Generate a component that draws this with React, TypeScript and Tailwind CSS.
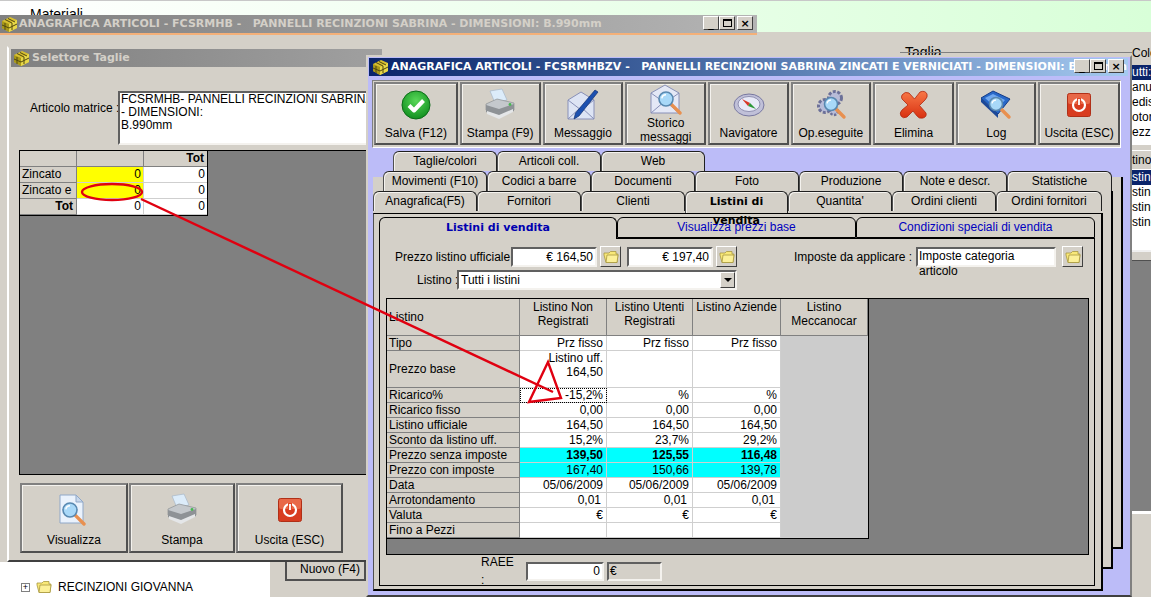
import React from "react";

const raised = "border border-t-white border-l-white border-b-[#404040] border-r-[#404040]";
const btnFrame = "border-2 border-t-[#808080] border-l-[#808080] border-b-[#505050] border-r-[#505050] shadow-[inset_1px_1px_0_#f4f2ee]";
const sunken = "border-2 border-t-[#606060] border-l-[#606060] border-b-[#f4f2ee] border-r-[#f4f2ee]";

const Cube = () => (
	<svg width="17" height="17" viewBox="0 0 17 17" className="shrink-0">
		<polygon points="1,5 9,1 16,4 16,12 8,16 1,12" fill="#d8c030" />
		<polygon points="1,5 8,8 8,16 1,12" fill="#a89818" />
		<polygon points="8,8 16,4 16,12 8,16" fill="#e8d848" />
		<path d="M4 3.5 L11 7 M7 2.5 L14 6 M4 7 V14 M11 7 V14 M1 9 L8 12 M8 12 L16 8" stroke="#504810" strokeWidth="1" fill="none" />
	</svg>
);

const Magnifier = ({ x, y, r = 7 }: { x: number; y: number; r?: number }) => (
	<g>
		<line x1={x + r * 0.7} y1={y + r * 0.7} x2={x + r * 2} y2={y + r * 2} stroke="#e89050" strokeWidth="3.4" strokeLinecap="round" />
		<circle cx={x} cy={y} r={r} fill="#a8d8f8" stroke="#5888b0" strokeWidth="1.6" />
		<path d={`M${x - r * 0.6} ${y - r * 0.1} A${r * 0.6} ${r * 0.6} 0 0 1 ${x} ${y - r * 0.6}`} stroke="#fff" strokeWidth="1.4" fill="none" />
	</g>
);

const Check = () => (
	<svg width="30" height="30" viewBox="0 0 30 30">
		<defs>
			<radialGradient id="chk" cx="50%" cy="35%" r="70%">
				<stop offset="0" stopColor="#58d858" />
				<stop offset="1" stopColor="#0c8a1c" />
			</radialGradient>
		</defs>
		<circle cx="15" cy="15" r="14" fill="url(#chk)" stroke="#0c6c18" />
		<path d="M8 15.5 L13 20.5 L22.5 10.5" stroke="#fff" strokeWidth="4" fill="none" strokeLinejoin="round" />
	</svg>
);

const Printer = () => (
	<svg width="34" height="34" viewBox="0 0 34 34">
		<polygon points="7,3 19,1 24,12 12,15" fill="#dcecfa" stroke="#a8b8c8" strokeWidth="0.7" />
		<polygon points="3,16 14,11 31,15 31,22 16,27 3,22" fill="#c4c8cc" stroke="#8c9094" strokeWidth="0.7" />
		<polygon points="3,17 16,21 31,16 31,23 16,30 3,24" fill="#8e9296" />
		<polygon points="4,23 16,27 30,21 30,24 16,31 4,26" fill="#e4e6e8" />
		<circle cx="27" cy="16.5" r="1.4" fill="#48b850" />
	</svg>
);

const PencilEnvelope = () => (
	<svg width="32" height="34" viewBox="0 0 32 34">
		<polygon points="1,12 14,4 27,12 27,31 1,31" fill="#dde4f4" stroke="#8890b8" />
		<path d="M1 31 L14 19 L27 31 M1 12 L14 22 L27 12" stroke="#8890b8" fill="none" />
		<path d="M28 2 L31 4 L12 28 L7 31 L8.5 25 Z" fill="#1c50b0" stroke="#123070" strokeWidth="0.7" />
	</svg>
);

const SearchEnvelope = () => (
	<svg width="32" height="32" viewBox="0 0 32 32">
		<polygon points="1,9 15,1 29,9 29,29 1,29" fill="#e4e8f6" stroke="#8890b8" />
		<path d="M1 29 L15 17 L29 29 M1 9 L15 19 L29 9" stroke="#8890b8" fill="none" />
		<Magnifier x={16} y={15} r={7} />
	</svg>
);

const Compass = () => (
	<svg width="32" height="26" viewBox="0 0 32 26">
		<ellipse cx="16" cy="13" rx="15" ry="11" fill="#c0c0d8" stroke="#7878a0" />
		<ellipse cx="16" cy="12" rx="11" ry="7.5" fill="#e8eaf8" stroke="#9090b0" />
		<polygon points="9,7 17,11 15,14" fill="#d83828" />
		<polygon points="23,17 17,11 15,14" fill="#2c9838" />
	</svg>
);

const Gears = () => (
	<svg width="32" height="32" viewBox="0 0 32 32">
		<circle cx="20" cy="9" r="6.5" fill="#b8bcd8" stroke="#6c7098" strokeWidth="3" strokeDasharray="3 1.6" />
		<circle cx="10" cy="17" r="6.5" fill="#b8bcd8" stroke="#6c7098" strokeWidth="3" strokeDasharray="3 1.6" />
		<circle cx="19" cy="22" r="4" fill="#b8bcd8" stroke="#6c7098" strokeWidth="2.4" strokeDasharray="2.4 1.4" />
		<Magnifier x={16} y={15} r={6.5} />
	</svg>
);

const RedX = () => (
	<svg width="30" height="30" viewBox="0 0 30 30">
		<defs>
			<linearGradient id="rx" x1="0" y1="0" x2="0" y2="1">
				<stop offset="0" stopColor="#f87848" />
				<stop offset="1" stopColor="#d83010" />
			</linearGradient>
		</defs>
		<path d="M3 5 Q6 1 10 3 L15.5 9 L21 2 Q26 0 28 4 Q29 7 26 10 L20.5 15.5 L27 23 Q28 27 24 28 Q20 29 18 26 L14 21 L8 27 Q4 29 2 26 Q0 23 3 20 L9 15 L3 9 Q2 7 3 5 Z" fill="url(#rx)" stroke="#b02810" strokeWidth="0.8" />
	</svg>
);

const Book = () => (
	<svg width="32" height="30" viewBox="0 0 32 30">
		<polygon points="1,8 13,1 30,9 18,24" fill="#2868c8" stroke="#143c88" />
		<polygon points="1,8 18,24 18,28 1,12" fill="#1c4898" />
		<polygon points="5,8 13,4 25,10 17,19" fill="#70a8f0" />
		<Magnifier x={16} y={14} r={6.5} />
	</svg>
);

const Power = () => (
	<svg width="24" height="24" viewBox="0 0 24 24">
		<rect x="0.5" y="0.5" width="23" height="23" rx="2" fill="#d83c20" stroke="#b03018" />
		<rect x="1" y="1" width="22" height="10" rx="2" fill="#e86848" />
		<circle cx="12" cy="12" r="6" fill="none" stroke="#fff" strokeWidth="2.2" />
		<line x1="12" y1="5" x2="12" y2="12" stroke="#e04828" strokeWidth="4" />
		<line x1="12" y1="6" x2="12" y2="12" stroke="#fff" strokeWidth="1.8" />
	</svg>
);

const DocSearch = () => (
	<svg width="30" height="32" viewBox="0 0 30 32">
		<polygon points="1,1 17,1 24,8 24,29 1,29" fill="#eaf2fc" stroke="#90a8c8" />
		<polygon points="17,1 17,8 24,8" fill="#c8d8ec" stroke="#90a8c8" />
		<Magnifier x={11} y={16} r={7} />
	</svg>
);

const Folder = () => (
	<svg width="16" height="14" viewBox="0 0 16 14">
		<path d="M1 3 H6 L7.5 1.5 H13 V4 H15 L14 12.5 H3 L1 5 Z" fill="#f8e878" stroke="#a89840" strokeWidth="0.8" />
		<path d="M4 5 H15 L14 12.5 H3 Z" fill="#fcf098" stroke="#a89840" strokeWidth="0.8" />
	</svg>
);

const FolderBtn = () => (
	<div className={`w-[21px] h-[21px] bg-[#d4d0c8] flex items-center justify-center ${raised}`}>
		<Folder />
	</div>
);

const ToolBtn = ({ icon, label, w }: { icon: React.ReactNode; label: string; w: string }) => (
	<div className={`${w} h-[63px] bg-[#d4d0c8] flex flex-col items-center pb-[3px] ${btnFrame}`}>
		<div className="flex-1 flex items-center justify-center">{icon}</div>
		<span className="text-center leading-[14px]">{label}</span>
	</div>
);

const Tab = ({ label, w = "w-[104px]" }: { label: string; w?: string }) => (
	<div className={`${w} h-[20px] bg-[#d4d0c8] text-center leading-[19px] rounded-t-[6px] border border-b-0 border-t-[#202020] border-l-[#505050] border-r-[#202020] shadow-[inset_1px_1px_0_#f4f2ee]`}>
		{label}
	</div>
);

const rows: { label: string; vals: string[]; h?: string; cls?: string }[] = [
	{ label: "Tipo", vals: ["Prz fisso", "Prz fisso", "Prz fisso"] },
	{ label: "Prezzo base", vals: ["Listino uff.\n164,50", "", ""], h: "h-[37px]" },
	{ label: "Ricarico%", vals: ["-15,2%", "%", "%"] },
	{ label: "Ricarico fisso", vals: ["0,00", "0,00", "0,00"] },
	{ label: "Listino ufficiale", vals: ["164,50", "164,50", "164,50"] },
	{ label: "Sconto da listino uff.", vals: ["15,2%", "23,7%", "29,2%"] },
	{ label: "Prezzo senza imposte", vals: ["139,50", "125,55", "116,48"], cls: "bg-[#00ffff] font-bold" },
	{ label: "Prezzo con imposte 20%", vals: ["167,40", "150,66", "139,78"], cls: "bg-[#00ffff]" },
	{ label: "Data", vals: ["05/06/2009", "05/06/2009", "05/06/2009"] },
	{ label: "Arrotondamento", vals: ["0,01", "0,01", "0,01"] },
	{ label: "Valuta", vals: ["€", "€", "€"] },
	{ label: "Fino a Pezzi", vals: ["", "", ""] },
];

const colW = ["w-[87px]", "w-[86px]", "w-[88px]"];

const PriceGrid = () => (
	<div className="ml-[6px] mt-[8px] w-[703px] h-[257px] bg-[#808080] border border-black">
		<div className="w-[482px] border-r border-b border-black bg-[#cccccc]">
			<div className="flex h-[37px]">
				<div className="w-[133px] bg-[#d4d0c8] border-r border-b border-[#808080] flex items-center pl-[2px]">Listino</div>
				{["Listino Non\nRegistrati", "Listino Utenti\nRegistrati", "Listino Aziende", "Listino\nMeccanocar"].map((h, i) => (
					<div key={i} className={`${i === 3 ? "w-[87px]" : colW[i]} bg-[#d4d0c8] border-r border-b border-[#808080] text-center whitespace-pre-line pt-[1px] leading-[14px]`}>
						{h}
					</div>
				))}
			</div>
			{rows.map((r, i) => (
				<div key={i} className={`flex ${r.h ?? "h-[15px]"}`}>
					<div className={`w-[133px] bg-[#d4d0c8] border-r border-b border-[#808080] pl-[2px] leading-[14px] ${r.h ? "flex items-center" : ""}`}>
						{r.label}
					</div>
					{r.vals.map((v, j) => (
						<div key={j} className={`${colW[j]} border-r border-b border-[#cfcfcf] text-right pr-[3px] leading-[14px] whitespace-pre-line ${r.cls ?? "bg-white"} ${r.label === "Ricarico%" && j === 0 ? "outline-1 outline-dotted outline-black -outline-offset-1" : ""} ${r.label === "Arrotondamento" ? "pr-[5px]" : ""}`}>
							{v}
						</div>
					))}
				</div>
			))}
		</div>
	</div>
);

const FrontWindow = () => (
	<div className="absolute left-[366px] top-[55px] w-[766px] h-[542px] bg-[#bcbcf8] border-2 border-[#d4d0c8] border-b-[#404040] border-r-[#808080] pl-[1px] pr-[2px]">
		{/* title */}
		<div className="h-[18px] mt-[1px] bg-gradient-to-r from-[#0a246a] to-[#a6caf0] flex items-center pl-[3px] gap-[2px] text-white font-bold text-[11px] [font-family:'DejaVu_Sans',Verdana,sans-serif] whitespace-pre relative">
			<Cube />
			<span>ANAGRAFICA ARTICOLI - FCSRMHBZV -   PANNELLI RECINZIONI SABRINA ZINCATI E VERNICIATI - DIMENSIONI: B.990mm</span>
			<WinButtons />
		</div>
		{/* toolbar */}
		<div className="mt-[4px] ml-[3px] w-[749px] h-[68px] bg-[#d4d0c8] border border-t-[#808080] border-l-[#808080] border-b-white border-r-white flex gap-[2px] pl-[1px] pt-[1px]">
			<ToolBtn w="w-[84px]" icon={<Check />} label="Salva (F12)" />
			<ToolBtn w="w-[81px]" icon={<Printer />} label="Stampa (F9)" />
			<ToolBtn w="w-[81px]" icon={<PencilEnvelope />} label="Messaggio" />
			<ToolBtn w="w-[81px]" icon={<SearchEnvelope />} label={"Storico messaggi"} />
			<ToolBtn w="w-[81px]" icon={<Compass />} label="Navigatore" />
			<ToolBtn w="w-[80px]" icon={<Gears />} label="Op.eseguite" />
			<ToolBtn w="w-[82px]" icon={<RedX />} label="Elimina" />
			<ToolBtn w="w-[80px]" icon={<Book />} label="Log" />
			<ToolBtn w="w-[82px]" icon={<Power />} label="Uscita (ESC)" />
		</div>
		{/* tabs */}
		<div className="relative mt-[3px]">
			<div className="absolute left-[4px] top-[26px] w-[750px] h-[372px] bg-[#d4d0c8] border-r-2 border-b-2 border-black" />
			<div className="absolute left-[4px] top-[40px] w-[740px] h-[378px] bg-[#d4d0c8] border-r-2 border-b-2 border-black" />
			<div className="relative flex ml-[24px]">
				<Tab label="Taglie/colori" />
				<Tab label="Articoli coll." />
				<Tab label="Web" />
			</div>
			<div className="relative flex ml-[14px]">
				<Tab label="Movimenti (F10)" />
				<Tab label="Codici a barre" />
				<Tab label="Documenti" />
				<Tab label="Foto" />
				<Tab label="Produzione" />
				<Tab label="Note e descr." />
				<Tab label="Statistiche" w="w-[105px]" />
			</div>
			<div className="relative flex ml-[4px]">
				<Tab label="Anagrafica(F5)" />
				<Tab label="Fornitori" />
				<Tab label="Clienti" />
				<div className="relative z-10 w-[103px] h-[22px] bg-[#d4d0c8] rounded-t-[6px] border border-b-0 border-t-[#202020] border-l-[#505050] border-r-[#202020] text-center font-bold leading-[19px] [font-family:'DejaVu_Sans',sans-serif] text-[11px] shadow-[inset_1px_1px_0_#f4f2ee]">
					Listini di vendita
				</div>
				<Tab label="Quantita'" />
				<Tab label="Ordini clienti" />
				<Tab label="Ordini fornitori" w="w-[106px]" />
			</div>
			{/* main panel */}
			<div className="relative ml-[4px] w-[730px] h-[378px] bg-[#d4d0c8] border-t border-l border-t-black border-l-[#505050] border-r-2 border-b-2 border-black pl-[5px] pt-[3px]">
				<div className="flex h-[21px] w-[716px] text-[#0000c0]">
					<div className="relative z-10 w-[238px] h-[22px] bg-[#d4d0c8] rounded-t-[6px] border border-b-0 border-black text-center font-bold text-[#0000b0] leading-[20px] [font-family:'DejaVu_Sans',sans-serif] text-[11px]">Listini di vendita</div>
					<div className="w-[239px] bg-[#d4d0c8] rounded-t-[6px] border border-black text-center leading-[19px]">Visualizza prezzi base</div>
					<div className="w-[239px] bg-[#d4d0c8] rounded-t-[6px] border border-black text-center leading-[19px]">Condizioni speciali di vendita</div>
				</div>
				<div className="w-[716px] h-[348px] bg-[#d4d0c8] border border-black border-t-black">
					<div className="flex items-center h-[21px] mt-[7px] pl-[15px]">
						<span className="w-[112px] whitespace-nowrap">Prezzo listino ufficiale :</span>
						<div className={`ml-[4px] w-[86px] h-[20px] bg-white text-right pr-[2px] leading-[16px] ${sunken}`}>€ 164,50</div>
						<div className="ml-[3px]"><FolderBtn /></div>
						<div className={`ml-[6px] w-[86px] h-[20px] bg-white text-right pr-[2px] leading-[16px] ${sunken}`}>€ 197,40</div>
						<div className="ml-[3px]"><FolderBtn /></div>
						<span className="ml-auto whitespace-nowrap">Imposte da applicare :</span>
						<div className={`ml-[4px] w-[140px] h-[20px] bg-white pl-[1px] leading-[15px] ${sunken}`}>Imposte categoria articolo</div>
						<div className="ml-[6px] mr-[11px]"><FolderBtn /></div>
					</div>
					<div className="flex items-center h-[20px] mt-[3px]">
						<span className="ml-[37px] w-[36px] whitespace-nowrap">Listino :</span>
						<div className={`ml-[4px] w-[280px] h-[20px] bg-white pl-[2px] leading-[16px] relative ${sunken}`}>
							Tutti i listini
							<div className={`absolute right-0 top-0 w-[15px] h-[16px] bg-[#d4d0c8] flex items-center justify-center ${raised}`}>
								<div className="w-0 h-0 border-x-[4px] border-x-transparent border-t-[4px] border-t-black" />
							</div>
						</div>
					</div>
					<PriceGrid />
					<div className="flex items-center h-[20px] mt-[6px]">
						<span className="ml-[101px] w-[36px] text-[12px]">RAEE :</span>
						<div className={`ml-[9px] w-[78px] h-[19px] bg-white text-right pr-[2px] leading-[15px] ${sunken}`}>0</div>
						<div className={`ml-[3px] w-[55px] h-[19px] bg-[#d4d0c8] pl-[1px] leading-[15px] ${sunken}`}>€</div>
					</div>
				</div>
			</div>
		</div>
	</div>
);

const WinButtons = () => (
	<div className="absolute right-[4px] top-[1px] flex text-black">
		{["_", "□", "×"].map((c, i) => (
			<div key={i} className={`w-[16px] h-[14px] bg-[#d4d0c8] flex items-center justify-center font-bold text-[11px] leading-none ${i === 2 ? "ml-[2px]" : ""} ${raised}`}>
				{i === 1 ? <div className="w-[9px] h-[8px] border border-black border-t-2" /> : c}
			</div>
		))}
	</div>
);

const SelBtn = ({ icon, label, w }: { icon: React.ReactNode; label: string; w: string }) => (
	<div className={`${w} h-[70px] bg-[#d4d0c8] flex flex-col items-center pb-[4px] ${btnFrame}`}>
		<div className="flex-1 flex items-center justify-center pt-[2px]">{icon}</div>
		<span className="leading-[14px]">{label}</span>
	</div>
);

const sizeRows = [
	{ label: "Zincato", a: "0", b: "0", yellow: true },
	{ label: "Zincato e", a: "0", b: "0", yellow: true },
	{ label: "Tot", a: "0", b: "0", yellow: false },
];

const Selettore = () => (
	<div className="absolute left-[7px] top-[46px] w-[375px] h-[516px] bg-[#d4d0c8] border-l-2 border-t-2 border-l-white border-t-[#d4d0c8] border-b-2 border-b-[#404040] pl-[2px] pt-[1px]">
		<div className="h-[18px] bg-gradient-to-r from-[#808080] to-[#a0a0a0] flex items-center pl-[2px] gap-[2px] text-[#d4d0c8] font-bold text-[11px] [font-family:'DejaVu_Sans',Verdana,sans-serif]">
			<Cube />
			<span>Selettore Taglie</span>
		</div>
		<div className="flex mt-[24px] pl-[19px]">
			<span className="w-[88px] pt-[8px] whitespace-nowrap">Articolo matrice :</span>
			<div className={`w-[260px] h-[54px] bg-white leading-[13px] pl-[1px] ${sunken}`}>
				FCSRMHB-  PANNELLI RECINZIONI SABRINA - DIMENSIONI:
				<br />
				B.990mm
			</div>
		</div>
		<div className="ml-[8px] mt-[5px] w-[350px] h-[325px] bg-[#808080] border border-black border-b-black">
			<div className="w-[188px] border-r border-b border-black">
				<div className="flex h-[16px]">
					<div className="w-[57px] bg-[#d4d0c8] border-r border-b border-[#808080]" />
					<div className="w-[67px] bg-[#d4d0c8] border-r border-b border-[#808080]" />
					<div className="flex-1 bg-[#d4d0c8] border-b border-[#808080] text-right font-bold pr-[3px] leading-[15px]">Tot</div>
				</div>
				{sizeRows.map((r) => (
					<div key={r.label} className="flex h-[16px]">
						<div className={`w-[57px] bg-[#d4d0c8] border-r border-b border-[#808080] pl-[2px] leading-[15px] ${r.yellow ? "" : "font-bold text-right pr-[3px]"}`}>{r.label}</div>
						<div className={`w-[67px] border-r border-b border-[#cfcfcf] text-right pr-[2px] leading-[15px] ${r.yellow ? "bg-[#ffff00]" : "bg-white"}`}>{r.a}</div>
						<div className="flex-1 bg-white border-b border-[#cfcfcf] text-right pr-[2px] leading-[15px]">{r.b}</div>
					</div>
				))}
			</div>
		</div>
		<div className="flex gap-[1px] ml-[9px] mt-[8px]">
			<SelBtn w="w-[108px]" icon={<DocSearch />} label="Visualizza" />
			<SelBtn w="w-[106px]" icon={<Printer />} label="Stampa" />
			<SelBtn w="w-[107px]" icon={<Power />} label="Uscita (ESC)" />
		</div>
	</div>
);

const BackWindow = () => (
	<div className="absolute left-0 top-[15px] w-[757px] h-[582px] overflow-hidden">
		<div className="h-[18px] bg-gradient-to-r from-[#808080] to-[#b4b4b4] flex items-center pl-[1px] gap-[1px] text-[#d4d0c8] font-bold text-[11px] [font-family:'DejaVu_Sans',Verdana,sans-serif] whitespace-pre relative">
			<Cube />
			<span>ANAGRAFICA ARTICOLI - FCSRMHB -   PANNELLI RECINZIONI SABRINA - DIMENSIONI: B.990mm</span>
			<WinButtons />
		</div>
		<div className="h-[2px] bg-[#f4b078]" />
		<div className="h-[562px] bg-[#d4d0c8] flex flex-col justify-end">
			<div className="h-[35px] flex">
				<div className="w-[270px] bg-white pl-[21px] text-black pt-[3px]">
					<div className="h-[14px]" />
					<div className="flex items-center gap-[6px] h-[16px]">
						<div className="w-[9px] h-[9px] border border-[#808080] text-[9px] leading-[7px] text-center">+</div>
						<Folder />
						<span>RECINZIONI GIOVANNA</span>
					</div>
				</div>
				<div className="ml-[15px] mt-0 w-[81px] h-[19px] border-2 border-[#505050] border-t-0 text-right pr-[4px] leading-[15px]">Nuovo (F4)</div>
			</div>
		</div>
	</div>
);

const RightEdge = () => (
	<div className="absolute left-[1132px] top-[32px] w-[19px] h-[565px] bg-[#d4d0c8] overflow-hidden whitespace-pre">
		<div className="mt-[14px] text-[12px] leading-[14px]">Colore</div>
		<div className="mt-[5px] bg-white h-[80px] leading-[15px]">
			<div className="bg-[#0a246a] text-white">utti:</div>
			<div>anu</div>
			<div>edis</div>
			<div>otor</div>
			<div>ezz</div>
		</div>
		<div className="mt-[5px] h-[20px] leading-[18px] border-y border-white">tino</div>
		<div className="bg-white h-[80px] leading-[15px]">
			<div className="bg-[#0a246a] text-white">stino</div>
			<div>stino</div>
			<div>stino</div>
			<div>stino</div>
		</div>
		<div className="h-[10px] border-t-2 border-[#f0f0f0]" />
		<div className="bg-[#808080] h-[251px] border-t border-[#505050]" />
		<div className="h-[3px] bg-white" />
	</div>
);

const Overlay = () => (
	<svg className="absolute inset-0 pointer-events-none" width="1151" height="597" viewBox="0 0 1151 597">
		<ellipse cx="112" cy="192" rx="30" ry="8" fill="none" stroke="#e00010" strokeWidth="2.4" />
		<line x1="141" y1="199" x2="553" y2="392" stroke="#e00010" strokeWidth="2.4" />
		<polygon points="548,362 529,402 561,398" fill="none" stroke="#e00010" strokeWidth="2.4" />
	</svg>
);

export default function App() {
	return (
		<div className="relative w-[1151px] h-[597px] overflow-hidden bg-white text-[12px] text-black [font-family:'Liberation_Sans',Arial,sans-serif]">
			{/* desktop behind */}
			<div className="h-[32px] bg-gradient-to-r from-white to-[#d8ffd8] border-t border-[#c8c8c8] pl-[30px] leading-[26px] text-[14px]">Materiali</div>
			<div className="h-[565px] bg-[#d4d0c8] relative">
				<span className="absolute left-[905px] top-[13px] text-[14px] leading-none">Taglia</span>
				<div className="absolute left-[900px] top-[20px] w-[232px] h-px bg-[#808080]" />
			</div>
			<RightEdge />
			<BackWindow />
			<Selettore />
			<FrontWindow />
			<Overlay />
		</div>
	);
}
